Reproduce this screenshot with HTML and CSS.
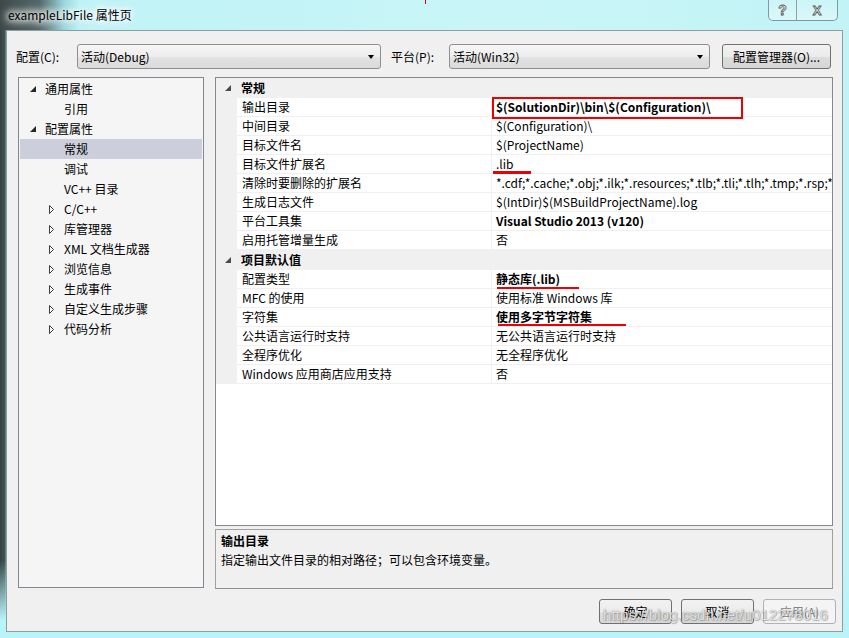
FILE: index.html
```html
<!DOCTYPE html>
<html>
<head>
<meta charset="utf-8">
<link rel="stylesheet" href="styles.css">
</head>
<body>
<div class="window">
  <div class="titlebar">
    <div class="title">exampleLibFile 属性页</div>
    <div class="caption">
      <div class="cb help">?</div>
      <div class="cb close">X</div>
    </div>
  </div>
  <div class="client">
    <div class="toolbar">
      <span class="lbl lbl1">配置(C):</span>
      <div class="combo combo1"><span>活动(Debug)</span><span class="arrow"></span></div>
      <span class="lbl lbl2">平台(P):</span>
      <div class="combo combo2"><span>活动(Win32)</span><span class="arrow"></span></div>
      <button class="btn mgr">配置管理器(O)...</button>
    </div>
    <div class="main">
      <div class="tree">
        <div class="ti l0"><span class="tw"><svg width="6" height="6" viewBox="0 0 6 6"><polygon points="6,0 6,6 0,6" fill="#262626"/></svg></span>通用属性</div>
        <div class="ti l1"><span class="tw"></span>引用</div>
        <div class="ti l0"><span class="tw"><svg width="6" height="6" viewBox="0 0 6 6"><polygon points="6,0 6,6 0,6" fill="#262626"/></svg></span>配置属性</div>
        <div class="ti l1 sel"><span class="tw"></span>常规</div>
        <div class="ti l1"><span class="tw"></span>调试</div>
        <div class="ti l1"><span class="tw"></span>VC++ 目录</div>
        <div class="ti l1"><span class="tw"><svg width="6" height="9" viewBox="0 0 6 9"><path d="M0.5 0.5 L4.5 4.5 L0.5 8.5 Z" fill="#fff" stroke="#3a3a3a" stroke-width="1"/></svg></span>C/C++</div>
        <div class="ti l1"><span class="tw"><svg width="6" height="9" viewBox="0 0 6 9"><path d="M0.5 0.5 L4.5 4.5 L0.5 8.5 Z" fill="#fff" stroke="#3a3a3a" stroke-width="1"/></svg></span>库管理器</div>
        <div class="ti l1"><span class="tw"><svg width="6" height="9" viewBox="0 0 6 9"><path d="M0.5 0.5 L4.5 4.5 L0.5 8.5 Z" fill="#fff" stroke="#3a3a3a" stroke-width="1"/></svg></span>XML 文档生成器</div>
        <div class="ti l1"><span class="tw"><svg width="6" height="9" viewBox="0 0 6 9"><path d="M0.5 0.5 L4.5 4.5 L0.5 8.5 Z" fill="#fff" stroke="#3a3a3a" stroke-width="1"/></svg></span>浏览信息</div>
        <div class="ti l1"><span class="tw"><svg width="6" height="9" viewBox="0 0 6 9"><path d="M0.5 0.5 L4.5 4.5 L0.5 8.5 Z" fill="#fff" stroke="#3a3a3a" stroke-width="1"/></svg></span>生成事件</div>
        <div class="ti l1"><span class="tw"><svg width="6" height="9" viewBox="0 0 6 9"><path d="M0.5 0.5 L4.5 4.5 L0.5 8.5 Z" fill="#fff" stroke="#3a3a3a" stroke-width="1"/></svg></span>自定义生成步骤</div>
        <div class="ti l1"><span class="tw"><svg width="6" height="9" viewBox="0 0 6 9"><path d="M0.5 0.5 L4.5 4.5 L0.5 8.5 Z" fill="#fff" stroke="#3a3a3a" stroke-width="1"/></svg></span>代码分析</div>
      </div>
      <div class="right">
        <div class="pgrid">
          <div class="grp"><svg width="6" height="6" viewBox="0 0 6 6"><polygon points="6,0 6,6 0,6" fill="#4a4a4a"/></svg><span>常规</span></div>
          <div class="row"><span class="m"></span><span class="n">输出目录</span><span class="v b">$(SolutionDir)\bin\$(Configuration)\</span></div>
          <div class="row"><span class="m"></span><span class="n">中间目录</span><span class="v">$(Configuration)\</span></div>
          <div class="row"><span class="m"></span><span class="n">目标文件名</span><span class="v">$(ProjectName)</span></div>
          <div class="row"><span class="m"></span><span class="n">目标文件扩展名</span><span class="v">.lib</span></div>
          <div class="row"><span class="m"></span><span class="n">清除时要删除的扩展名</span><span class="v">*.cdf;*.cache;*.obj;*.ilk;*.resources;*.tlb;*.tli;*.tlh;*.tmp;*.rsp;*.pgc;*.pgd;*.meta;*.tlog</span></div>
          <div class="row"><span class="m"></span><span class="n">生成日志文件</span><span class="v">$(IntDir)$(MSBuildProjectName).log</span></div>
          <div class="row"><span class="m"></span><span class="n">平台工具集</span><span class="v b">Visual Studio 2013 (v120)</span></div>
          <div class="row"><span class="m"></span><span class="n">启用托管增量生成</span><span class="v">否</span></div>
          <div class="grp"><svg width="6" height="6" viewBox="0 0 6 6"><polygon points="6,0 6,6 0,6" fill="#4a4a4a"/></svg><span>项目默认值</span></div>
          <div class="row"><span class="m"></span><span class="n">配置类型</span><span class="v b">静态库(.lib)</span></div>
          <div class="row"><span class="m"></span><span class="n">MFC 的使用</span><span class="v">使用标准 Windows 库</span></div>
          <div class="row"><span class="m"></span><span class="n">字符集</span><span class="v b">使用多字节字符集</span></div>
          <div class="row"><span class="m"></span><span class="n">公共语言运行时支持</span><span class="v">无公共语言运行时支持</span></div>
          <div class="row"><span class="m"></span><span class="n">全程序优化</span><span class="v">无全程序优化</span></div>
          <div class="row"><span class="m"></span><span class="n">Windows 应用商店应用支持</span><span class="v">否</span></div>
        </div>
        <div class="desc">
          <div class="desc-title">输出目录</div>
          <div class="desc-text">指定输出文件目录的相对路径；可以包含环境变量。</div>
        </div>
      </div>
    </div>
    <div class="footer">
      <button class="btn fbtn">确定</button>
      <button class="btn fbtn">取消</button>
      <button class="btn fbtn disabled">应用(A)</button>
    </div>
  </div>

  <div class="mark box"></div>
  <div class="mark ul1"></div>
  <div class="mark ul2"></div>
  <div class="mark ul3"></div>
  <div class="mark tick"></div>
  <div class="watermark">https://blog.csdn.net/u012278016</div>
</div>
</body>
</html>
```

FILE: styles.css
```css
* { box-sizing: border-box; }
html, body { margin: 0; padding: 0; }
body {
  font-family: "Noto Sans CJK SC", "Noto Sans", sans-serif;
  font-size: 12px;
  color: #000;
  background: #c2f1f5;
}
.window {
  position: relative;
  width: 849px;
  height: 638px;
  overflow: hidden;
  background:
    linear-gradient(180deg, rgba(0,0,0,0) 0, rgba(0,0,0,0) 560px, rgba(185,244,249,1) 620px),
    linear-gradient(90deg, #34403f 0, #3f5554 5px, #b3eef3 7px, #c2f2f6 100%);
}
.titlebar {
  height: 30px;
  display: flex;
  justify-content: space-between;
  align-items: flex-start;
  padding: 0 11px 0 8px;
  background: linear-gradient(90deg, #3e4848 0, #56696a 40px, #9ad7dd 64px, #bff2f6 80px, #c9f5f8 60%, #c2f3f6 100%);
}
.title {
  line-height: 30px;
  font-size: 12px;
  color: #000;
  text-shadow: 0 0 6px #fff, 0 0 8px #fff, 0 0 10px #fff, 0 0 12px #fff;
}
.caption {
  display: flex;
  height: 21px;
  border: 1px solid #7f9aa0;
  border-top: none;
  border-radius: 0 0 5px 5px;
  background: linear-gradient(180deg, rgba(255,255,255,0.15), rgba(255,255,255,0.4));
  overflow: hidden;
}
.cb {
  display: flex;
  align-items: center;
  justify-content: center;
  font-family: "Liberation Sans", sans-serif;
  font-weight: bold;
  font-size: 14px;
  color: #f4f4f4;
  -webkit-text-stroke: 0.8px #555;
  height: 20px;
}
.cb.help { width: 28px; border-right: 1px solid #8aa3a8; }
.cb.close { width: 40px; font-size: 13px; }

.client {
  margin-left: 6px;
  width: 837px;
  height: 602px;
  border: 1px solid #8d9da2;
  background: #f0f0f0;
}
.toolbar {
  display: flex;
  align-items: center;
  height: 25px;
  margin-top: 13px;
  padding-left: 9px;
}
.lbl { line-height: 25px; }
.lbl1 { width: 61px; }
.lbl2 { width: 58px; margin-left: 10px; }
.combo {
  height: 25px;
  border: 1px solid #8e8f8f;
  border-radius: 3px;
  background: linear-gradient(180deg, #f6f6f6 0, #ededed 50%, #e3e3e3 51%, #dadada 100%);
  display: flex;
  align-items: center;
  justify-content: space-between;
  padding: 0 5px 0 3px;
  line-height: 23px;
}
.combo1 { width: 304px; }
.combo2 { width: 261px; }
.arrow {
  width: 0; height: 0;
  border-left: 3.5px solid transparent;
  border-right: 3.5px solid transparent;
  border-top: 4px solid #000;
  margin-right: 1px;
}
.btn {
  font-family: "Noto Sans CJK SC", "Noto Sans", sans-serif;
  font-size: 12px;
  color: #000;
  height: 25px;
  border: 1px solid #707070;
  border-radius: 3px;
  background: linear-gradient(180deg, #f2f2f2 0, #ebebeb 50%, #dddddd 51%, #d6d6d6 100%);
  padding: 0;
  line-height: 23px;
}
.mgr { width: 109px; margin-left: 12px; }

.main {
  display: flex;
  margin-top: 8px;
  padding-left: 11px;
  height: 512px;
  gap: 11px;
}
.tree {
  width: 186px;
  height: 511px;
  border: 1px solid #828790;
  background: #f5f5f5;
  padding-top: 1px;
}
.ti {
  height: 20px;
  line-height: 20px;
  display: flex;
  align-items: center;
  margin: 0 1px;
  white-space: nowrap;
}
.ti.l0 { padding-left: 9px; }
.ti.l1 { padding-left: 28px; }
.tw {
  width: 16px;
  height: 20px;
  display: flex;
  align-items: center;
  justify-content: flex-start;
  padding-left: 1px;
}
.ti.sel { background: #cccedb; }

.right {
  width: 618px;
  display: flex;
  flex-direction: column;
  gap: 3px;
}
.pgrid {
  height: 449px;
  border: 1px solid #828790;
  background: #fff;
  overflow: hidden;
}
.grp {
  height: 20px;
  background: #f0f0f0;
  display: flex;
  align-items: center;
  padding-left: 9px;
  font-weight: bold;
  line-height: 20px;
}
.grp span { margin-left: 10px; }
.row {
  display: grid;
  grid-template-columns: 21px 255px 1fr;
  height: 19px;
}
.row .m { background: #f0f0f0; }
.row .n {
  padding-left: 5px;
  line-height: 18px;
  border-bottom: 1px solid #f0f0f0;
  border-right: 1px solid #f0f0f0;
  white-space: nowrap;
}
.row .v {
  padding-left: 4px;
  line-height: 18px;
  border-bottom: 1px solid #f0f0f0;
  white-space: nowrap;
  overflow: hidden;
}
.row .v.b { font-weight: bold; }

.desc {
  height: 60px;
  border: 1px solid #a0a0a0;
  border-bottom-color: #909090;
  background: #f0f0f0;
  padding: 1px 0 0 5px;
  line-height: 19px;
}
.desc-title { font-weight: bold; }

.footer {
  display: flex;
  justify-content: flex-end;
  gap: 9px;
  margin-top: 10px;
  padding-right: 6px;
}
.fbtn { width: 73px; }
.fbtn.disabled {
  border-color: #adb2b5;
  background: #f4f4f4;
  color: #838383;
}

.mark { position: absolute; background: #f00; }
.mark.box {
  left: 492px; top: 97px; width: 251px; height: 22px;
  background: transparent;
  border: 2px solid #ee0000;
}
.mark.ul1 { left: 493px; top: 171px; width: 38px; height: 3px; background: #ee0000; }
.mark.ul2 { left: 497px; top: 287px; width: 82px; height: 2px; background: #ee0000; }
.mark.ul3 { left: 498px; top: 324px; width: 128px; height: 2px; background: #ee0000; }
.mark.tick { left: 425px; top: 0; width: 1px; height: 4px; background: #d00; }

.watermark {
  position: absolute;
  left: 603px;
  top: 606px;
  font-family: "Liberation Sans", sans-serif;
  font-size: 15px;
  color: rgba(255,255,255,0.8);
  text-shadow: 0 0 1px rgba(60,60,60,0.7), 1px 1px 1px rgba(80,80,80,0.35);
  letter-spacing: 0.1px;
  pointer-events: none;
}
```
